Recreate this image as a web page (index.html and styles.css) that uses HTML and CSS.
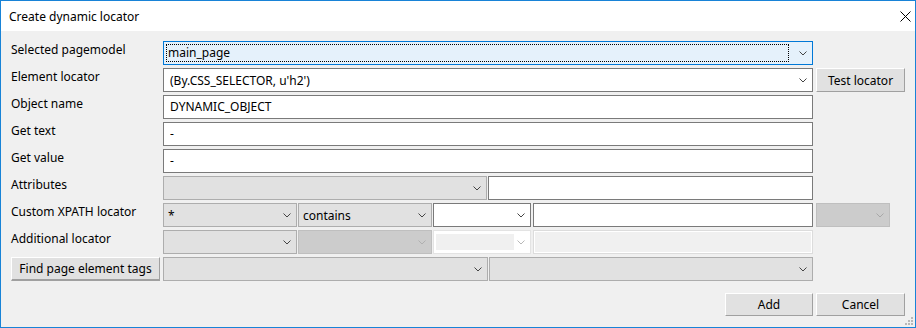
FILE: index.html
```html
<!DOCTYPE html>
<html lang="en">
<head>
    <meta charset="UTF-8">
    <title>Create dynamic locator</title>
    <link rel="stylesheet" href="styles.css">
</head>
<body>
    <div class="okno">
        <div class="tytul">
            <span>Create dynamic locator</span>
            <svg class="zamknij" width="11" height="11" viewBox="0 0 11 11"><path d="M0.5 0.5 L10.5 10.5 M10.5 0.5 L0.5 10.5" stroke="#000" stroke-width="1" fill="none"/></svg>
        </div>
        <div class="srodek">
            <div class="formularz">
                <div class="etykieta">Selected pagemodel</div>
                <div class="pole">
                    <div class="combo aktywne"><span class="fokus">main_page</span><svg class="strzalka" width="8" height="5" viewBox="0 0 8 5"><path d="M0.5 0.5 L4 4 L7.5 0.5" stroke="#444" fill="none"/></svg></div>
                </div>
                <div></div>

                <div class="etykieta">Element locator</div>
                <div class="pole">
                    <div class="combo edycja"><span class="tekst">(By.CSS_SELECTOR, u'h2')</span><svg class="strzalka" width="8" height="5" viewBox="0 0 8 5"><path d="M0.5 0.5 L4 4 L7.5 0.5" stroke="#444" fill="none"/></svg></div>
                </div>
                <div class="przycisk">Test locator</div>

                <div class="etykieta">Object name</div>
                <div class="pole"><div class="wpis">DYNAMIC_OBJECT</div></div>
                <div></div>

                <div class="etykieta">Get text</div>
                <div class="pole"><div class="wpis">-</div></div>
                <div></div>

                <div class="etykieta">Get value</div>
                <div class="pole"><div class="wpis">-</div></div>
                <div></div>

                <div class="etykieta">Attributes</div>
                <div class="pole">
                    <div class="combo lista w324"><span></span><svg class="strzalka" width="8" height="5" viewBox="0 0 8 5"><path d="M0.5 0.5 L4 4 L7.5 0.5" stroke="#444" fill="none"/></svg></div>
                    <div class="wpis reszta"></div>
                </div>
                <div></div>

                <div class="etykieta">Custom XPATH locator</div>
                <div class="pole">
                    <div class="combo lista w134"><span>*</span><svg class="strzalka" width="8" height="5" viewBox="0 0 8 5"><path d="M0.5 0.5 L4 4 L7.5 0.5" stroke="#444" fill="none"/></svg></div>
                    <div class="combo lista w134"><span>contains</span><svg class="strzalka" width="8" height="5" viewBox="0 0 8 5"><path d="M0.5 0.5 L4 4 L7.5 0.5" stroke="#444" fill="none"/></svg></div>
                    <div class="combo edycja w98"><span></span><svg class="strzalka" width="8" height="5" viewBox="0 0 8 5"><path d="M0.5 0.5 L4 4 L7.5 0.5" stroke="#444" fill="none"/></svg></div>
                    <div class="wpis reszta odstep"></div>
                </div>
                <div class="bok">
                    <div class="combo wylaczone w74"><span></span><svg class="strzalka" width="8" height="5" viewBox="0 0 8 5"><path d="M0.5 0.5 L4 4 L7.5 0.5" stroke="#a8a8a8" fill="none"/></svg></div>
                </div>

                <div class="etykieta">Additional locator</div>
                <div class="pole">
                    <div class="combo lista w134"><span></span><svg class="strzalka" width="8" height="5" viewBox="0 0 8 5"><path d="M0.5 0.5 L4 4 L7.5 0.5" stroke="#444" fill="none"/></svg></div>
                    <div class="combo wylaczone w134"><span></span><svg class="strzalka" width="8" height="5" viewBox="0 0 8 5"><path d="M0.5 0.5 L4 4 L7.5 0.5" stroke="#b0b0b0" fill="none"/></svg></div>
                    <div class="combo wylaczone-edycja w98"><span class="szare"></span><svg class="strzalka" width="8" height="5" viewBox="0 0 8 5"><path d="M0.5 0.5 L4 4 L7.5 0.5" stroke="#b8b8b8" fill="none"/></svg></div>
                    <div class="wpis reszta odstep nieaktywny"></div>
                </div>
                <div></div>

                <div class="przycisk szeroki">Find page element tags</div>
                <div class="pole">
                    <div class="combo lista w325"><span></span><svg class="strzalka" width="8" height="5" viewBox="0 0 8 5"><path d="M0.5 0.5 L4 4 L7.5 0.5" stroke="#444" fill="none"/></svg></div>
                    <div class="combo lista reszta"><span></span><svg class="strzalka" width="8" height="5" viewBox="0 0 8 5"><path d="M0.5 0.5 L4 4 L7.5 0.5" stroke="#444" fill="none"/></svg></div>
                </div>
                <div></div>
            </div>

            <div class="akcje">
                <div class="przycisk dodaj">Add</div>
                <div class="przycisk anuluj">Cancel</div>
            </div>
            <svg class="uchwyt" width="9" height="9" viewBox="0 0 9 9">
                <rect x="6" y="0" width="2" height="2" fill="#b8b8b8"/>
                <rect x="3" y="3" width="2" height="2" fill="#b8b8b8"/>
                <rect x="6" y="3" width="2" height="2" fill="#b8b8b8"/>
                <rect x="0" y="6" width="2" height="2" fill="#b8b8b8"/>
                <rect x="3" y="6" width="2" height="2" fill="#b8b8b8"/>
                <rect x="6" y="6" width="2" height="2" fill="#b8b8b8"/>
            </svg>
        </div>
    </div>
</body>
</html>
```

FILE: styles.css
```css
*{
    box-sizing: border-box;
    font-family: "Segoe UI", "Noto Sans", sans-serif;
    font-size: 12px;
}
body{
    margin: 0;
    background-color: #f0f0f0;
}
.okno{
    width: 916px;
    height: 328px;
    border: 1px solid #1883d7;
    background-color: #f0f0f0;
    display: flex;
    flex-direction: column;
}
.tytul{
    height: 30px;
    background-color: white;
    display: flex;
    align-items: center;
    justify-content: space-between;
    padding: 0 4px 0 8px;
    color: black;
}
.srodek{
    position: relative;
    flex: 1;
    padding: 10px 10px 0 10px;
}
.formularz{
    display: grid;
    grid-template-columns: 149px 650px 89px;
    grid-auto-rows: 24px;
    column-gap: 3px;
    row-gap: 3px;
}
.etykieta{
    padding-top: 1px;
    line-height: 16px;
    color: black;
}
.pole{
    display: flex;
    gap: 1px;
}
.bok{
    display: flex;
}

.combo{
    height: 24px;
    display: flex;
    align-items: center;
    justify-content: space-between;
    padding: 0 5px 0 4px;
    border: 1px solid #adadad;
    background-color: #e1e1e1;
    flex: 1;
}
.combo span{
    white-space: nowrap;
}
.aktywne{
    border-color: #0078d7;
    background-color: #e5f1fb;
    padding: 0 5px 0 2px;
}
.fokus{
    flex: 1;
    height: 18px;
    line-height: 16px;
    border: 1px dotted black;
    margin-right: 10px;
    padding-left: 1px;
}
.edycja{
    background-color: white;
    border-color: #7a7a7a;
    padding-left: 6px;
}
.wylaczone{
    background-color: #cccccc;
    border-color: #bfbfbf;
}
.wylaczone-edycja{
    background-color: white;
    border-color: #e3e3e3;
    padding-left: 2px;
}
.szare{
    height: 16px;
    width: 78px;
    background-color: #f0f0f0;
}
.wpis{
    flex: 1;
    height: 24px;
    line-height: 22px;
    padding-left: 6px;
    border: 1px solid #7a7a7a;
    background-color: white;
}
.nieaktywny{
    background-color: #f0f0f0;
    border-color: #dcdcdc;
    box-shadow: inset 0 0 0 1px white;
}
.odstep{
    margin-left: 1px;
}
.w324{ flex: 0 0 324px; }
.w325{ flex: 0 0 325px; }
.w134{ flex: 0 0 134px; }
.w98{ flex: 0 0 98px; }
.w74{ flex: 0 0 74px; }
.reszta{ flex: 1; }

.przycisk{
    height: 24px;
    display: flex;
    align-items: center;
    justify-content: center;
    background-color: #e1e1e1;
    border: 1px solid;
    border-color: white #a0a0a0 #a0a0a0 white;
    color: black;
}
.szeroki{
    border-bottom-width: 2px;
}
.akcje{
    display: flex;
    justify-content: flex-end;
    gap: 3px;
    margin-top: 12px;
}
.dodaj{
    width: 88px;
    height: 23px;
}
.anuluj{
    width: 89px;
    height: 23px;
}
.uchwyt{
    position: absolute;
    right: 1px;
    bottom: 1px;
}
```
